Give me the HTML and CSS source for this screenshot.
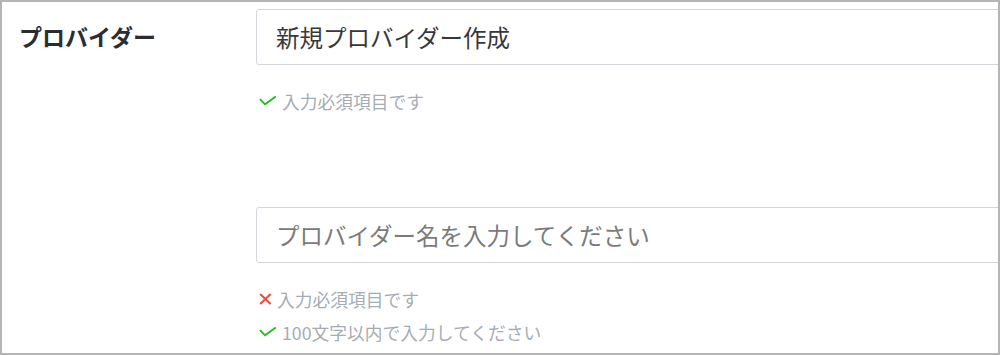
FILE: index.html
```html
<!DOCTYPE html>
<html lang="ja">
<head>
<meta charset="utf-8">
<title>プロバイダー</title>
<link rel="stylesheet" href="styles.css">
</head>
<body>
<div class="frame">
  <div class="row">
    <div class="label">プロバイダー</div>
    <div class="fields">
      <div class="field">
        <input class="text-input" type="text" value="新規プロバイダー作成">
        <ul class="rules">
          <li class="rule"><svg class="ico-ok" width="18" height="12" viewBox="0 0 18 12"><path d="M1 4.2 L6 9.3 L16.8 1.4" fill="none" stroke="#1fbf1f" stroke-width="1.9"/></svg><span>入力必須項目です</span></li>
        </ul>
      </div>
      <div class="field field-second">
        <input class="text-input" type="text" placeholder="プロバイダー名を入力してください">
        <ul class="rules">
          <li class="rule"><svg class="ico-ng" width="13" height="12" viewBox="0 0 13 12"><path d="M1.2 1 L11.6 11 M11.6 1 L1.2 11" fill="none" stroke="#ef4a3a" stroke-width="2.1"/></svg><span>入力必須項目です</span></li>
          <li class="rule"><svg class="ico-ok" width="18" height="12" viewBox="0 0 18 12"><path d="M1 4.2 L6 9.3 L16.8 1.4" fill="none" stroke="#1fbf1f" stroke-width="1.9"/></svg><span>100文字以内で入力してください</span></li>
        </ul>
      </div>
    </div>
  </div>
</div>
</body>
</html>
```

FILE: styles.css
```css
html, body {
  margin: 0;
  padding: 0;
  background: #ffffff;
}

body {
  font-family: "Noto Sans CJK JP", "Noto Sans", sans-serif;
}

.frame {
  box-sizing: border-box;
  width: 1000px;
  height: 355px;
  border: 2px solid #b4b4b4;
  overflow: hidden;
  padding: 7px 0 0 17px;
  background: #ffffff;
}

.row {
  display: grid;
  grid-template-columns: 237px 800px;
}

.label {
  height: 56px;
  line-height: 54px;
  font-size: 23px;
  font-weight: 700;
  color: #2b2d31;
  white-space: nowrap;
}

.fields {
  display: flex;
  flex-direction: column;
}

.field-second {
  margin-top: 93px;
}

.text-input {
  display: block;
  box-sizing: border-box;
  width: 800px;
  height: 56px;
  margin: 0;
  padding: 0 19px;
  border: 1px solid #d3d7dc;
  border-radius: 3px;
  background: #ffffff;
  font-family: "Noto Sans CJK JP", "Noto Sans", sans-serif;
  font-size: 23.5px;
  color: #383838;
  outline: none;
}

.text-input::placeholder {
  color: #7b7b7b;
  opacity: 1;
}

.rules {
  list-style: none;
  margin: 23px 0 0 0;
  padding: 0 0 0 3px;
  display: flex;
  flex-direction: column;
  gap: 7px;
}

.rule {
  display: flex;
  align-items: center;
  gap: 5px;
  height: 26px;
  line-height: 26px;
  font-size: 17.75px;
  color: #a6acb3;
  white-space: nowrap;
}

.rule svg {
  flex: none;
  display: block;
}
```
